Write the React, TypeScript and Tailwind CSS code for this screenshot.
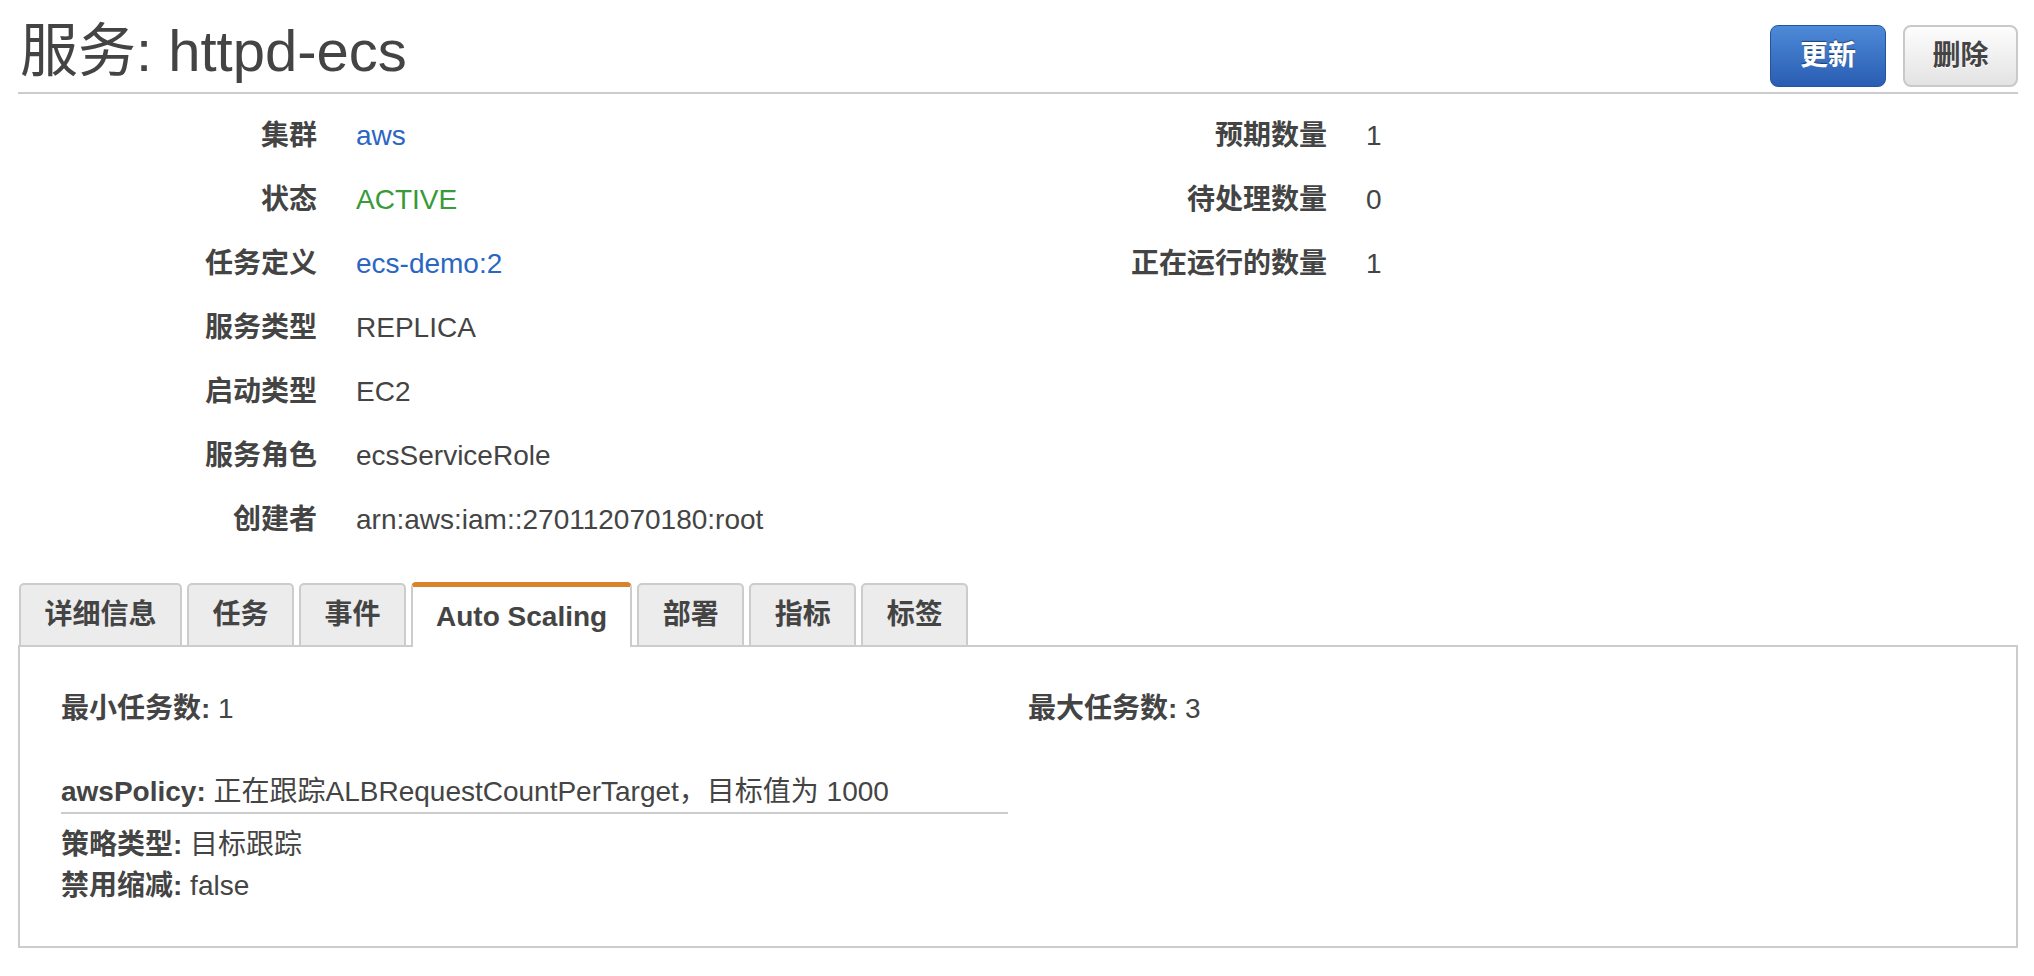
import React from 'react';

interface Field {
  label: string;
  value: string;
  tone?: 'link' | 'ok';
}

const leftFields: Field[] = [
  { label: '集群', value: 'aws', tone: 'link' },
  { label: '状态', value: 'ACTIVE', tone: 'ok' },
  { label: '任务定义', value: 'ecs-demo:2', tone: 'link' },
  { label: '服务类型', value: 'REPLICA' },
  { label: '启动类型', value: 'EC2' },
  { label: '服务角色', value: 'ecsServiceRole' },
  { label: '创建者', value: 'arn:aws:iam::270112070180:root' },
];

const rightFields: Field[] = [
  { label: '预期数量', value: '1' },
  { label: '待处理数量', value: '0' },
  { label: '正在运行的数量', value: '1' },
];

const tabs = ['详细信息', '任务', '事件', 'Auto Scaling', '部署', '指标', '标签'];

const toneClass = (tone?: Field['tone']) => {
  if (tone === 'link') return 'text-[#2a66c2]';
  if (tone === 'ok') return 'text-[#389a38]';
  return 'text-[#444]';
};

const FieldRow = ({ field, labelWidth }: { field: Field; labelWidth: string }) => (
  <div className="flex h-[64px] items-center leading-[64px]">
    <div className={`${labelWidth} shrink-0 text-right font-bold text-[#444]`}>{field.label}</div>
    <div className={`ml-[39px] ${toneClass(field.tone)}`}>{field.value}</div>
  </div>
);

const App = () => {
  const active = 'Auto Scaling';

  return (
    <div className="min-h-screen bg-white pl-[18px] pr-[16px] font-['Liberation_Sans','Noto_Sans_CJK_SC',sans-serif] text-[28px] text-[#444]">
      {/* header */}
      <div className="flex h-[94px] items-start justify-between border-b-2 border-[#cccccc]">
        <h1 className="ml-[2px] mt-[20px] text-[58px] font-normal leading-[62px] text-[#444]">服务: httpd-ecs</h1>
        <div className="mt-[25px] flex gap-[17px]">
          <button className="h-[62px] w-[116px] rounded-[8px] border border-[#2354a3] bg-gradient-to-b from-[#4e8ad8] to-[#2a5db2] font-bold text-white [text-shadow:0_-1px_1px_rgba(0,0,0,0.45)]">
            更新
          </button>
          <button className="h-[62px] w-[115px] rounded-[8px] border-2 border-[#c9c9c9] bg-gradient-to-b from-[#fdfdfd] to-[#e3e3e3] font-bold text-[#444] [text-shadow:0_1px_0_rgba(255,255,255,0.9)]">
            删除
          </button>
        </div>
      </div>

      {/* summary */}
      <div className="mt-[10px] grid grid-cols-2">
        <div>
          {leftFields.map((f) => (
            <FieldRow key={f.label} field={f} labelWidth="w-[299px]" />
          ))}
        </div>
        <div>
          {rightFields.map((f) => (
            <FieldRow key={f.label} field={f} labelWidth="w-[309px]" />
          ))}
        </div>
      </div>

      {/* tabs */}
      <div className="mt-[30px]">
        <div className="relative z-10 -mb-[2px] ml-[1px] flex items-end gap-[5px]">
          {tabs.map((t) =>
            t === active ? (
              <div
                key={t}
                className="flex h-[65px] items-center rounded-t-[5px] border-x-2 border-t-[5px] border-x-[#cccccc] border-t-[#d9822b] bg-white px-[23px] font-bold leading-none text-[#444]"
              >
                {t}
              </div>
            ) : (
              <div
                key={t}
                className="flex h-[64px] items-center rounded-t-[5px] border-2 border-[#cccccc] bg-[#ececec] px-[23.5px] font-bold leading-none text-[#444]"
              >
                {t}
              </div>
            )
          )}
        </div>

        <div className="h-[303px] border-2 border-[#cccccc] pl-[41px] pr-[41px] pt-[44px]">
          <div className="grid grid-cols-[967px_1fr] leading-[36px]">
            <div>
              <span className="font-bold">最小任务数:</span> 1
            </div>
            <div>
              <span className="font-bold">最大任务数:</span> 3
            </div>
          </div>

          <div className="mt-[47px] w-[947px] border-b-2 border-[#cccccc] pb-[2px] leading-[36px]">
            <span className="font-bold">awsPolicy:</span> 正在跟踪ALBRequestCountPerTarget，目标值为 1000
          </div>
          <div className="mt-[10px] leading-[41px]">
            <div>
              <span className="font-bold">策略类型:</span> 目标跟踪
            </div>
            <div>
              <span className="font-bold">禁用缩减:</span> false
            </div>
          </div>
        </div>
      </div>
    </div>
  );
};

export default App;
